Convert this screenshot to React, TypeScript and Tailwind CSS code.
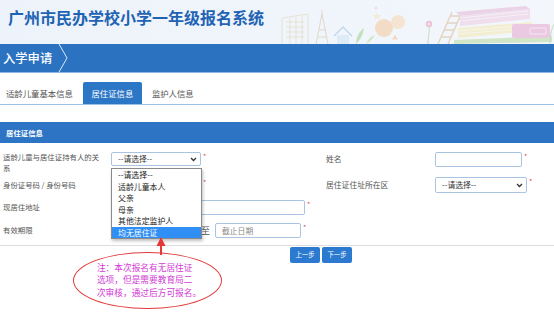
import React from 'react';

const CJK = "font-['Noto_Sans_CJK_SC','Noto_Sans',sans-serif]";

const options = ['--请选择--', '适龄儿童本人', '父亲', '母亲', '其他法定监护人', '均无居住证'];

const Star: React.FC = () => <span className="text-[#e04848] text-[7px] leading-none self-start mt-[1px] ml-[2px]">*</span>;

const Chevron: React.FC = () => (
  <svg width="7" height="5" viewBox="0 0 7 5" className="shrink-0">
    <path d="M1 1l2.5 2.5L6 1" fill="none" stroke="#333" strokeWidth="1.3" />
  </svg>
);

const HeaderArt: React.FC = () => (
  <svg width="274" height="44" viewBox="0 0 274 44" className="shrink-0 opacity-55">
    {/* building sketch */}
    <g stroke="#d9c9a8" strokeWidth="0.8" fill="none">
      <path d="M2 44V18l26-4v30" />
      <path d="M6 22h18M6 27h18M6 32h18M6 37h18M10 18v26M16 17v27M22 16v28" />
      {/* tower */}
      <path d="M36 44l6-30 6 30M39 30h7M38 37h9M42 14v-4" stroke="#cdb58a" />
    </g>
    {/* house */}
    <path d="M54 36l9-9 9 9" fill="none" stroke="#8fbbe0" strokeWidth="1.2" />
    <rect x="57" y="35" width="12" height="9" fill="#cfe4f5" />
    {/* leaves */}
    <path d="M76 44c0-8 4-13 8-16-1 6-3 11-8 16z" fill="#9fd18b" />
    <path d="M86 44c2-5 5-8 9-9-2 4-5 7-9 9z" fill="#b8de9c" />
    {/* orange shapes */}
    <circle cx="104" cy="28" r="9" fill="#f6c79a" />
    <circle cx="118" cy="22" r="7" fill="#f9d7b0" />
    <path d="M112 40l3-5 3 5-3-1z" fill="#f3b98a" />
    <path d="M96 12l2 3 3 0-2 2 1 3-3-2-3 2 1-3-2-2h3z" fill="#f7e2b8" />
    <circle cx="96" cy="8" r="1.5" fill="#f0c6d8" />
    {/* flower */}
    <path d="M148 44c0-8 2-12 1-18" stroke="#9cc98a" strokeWidth="1" fill="none" />
    <circle cx="149" cy="24" r="3.2" fill="#e79ac0" />
    <circle cx="149" cy="24" r="1.3" fill="#f7e3a0" />
    {/* ladder */}
    <g stroke="#d8b890" strokeWidth="1.4" fill="none">
      <path d="M158 44l14-32M168 44l14-32" />
      <path d="M161 37h10M164 30h10M167 23h10M170 16h10" />
    </g>
    {/* books */}
    <path d="M176 12l70-6 4 3-70 7z" fill="#e6b7d6" />
    <path d="M180 16l70-7v10l-70 7z" fill="#eecbe2" />
    <path d="M180 18l68-7M180 21l68-7" stroke="#fff" strokeWidth="0.6" />
    <path d="M178 28l74-6v9l-74 7z" fill="#f4e6b0" />
    <path d="M178 31l72-6M178 34l72-6" stroke="#fff" strokeWidth="0.6" />
    <path d="M174 40l98-4v6l-98 2z" fill="#b7d99a" />
    <rect x="232" y="24" width="38" height="14" rx="2" fill="#e7a5cf" />
    <rect x="250" y="28" width="16" height="6" rx="1" fill="none" stroke="#fff" strokeWidth="0.6" />
    <path d="M270 44c0-10 2-16 4-20" stroke="#9cc98a" strokeWidth="1" fill="none" />
  </svg>
);

export default function App() {
  return (
    <div className={`w-[554px] h-[327px] overflow-hidden bg-white relative ${CJK}`}>
      {/* header */}
      <div className="h-[44px] flex items-start justify-between bg-gradient-to-r from-[#edf3fa] to-[#f3f7fc]">
        <div className="pl-[8px] pt-[6px] text-[16px] leading-[22px] font-bold text-[#1f63b4] whitespace-nowrap">
          广州市民办学校小学一年级报名系统
        </div>
        <HeaderArt />
      </div>

      {/* nav bar */}
      <div className="h-[29px] bg-[#2b72c1] border-b border-[#8db7e3] flex items-center">
        <span className="pl-[3px] text-[12.3px] leading-none text-white font-medium">入学申请</span>
        <svg width="12" height="28" viewBox="0 0 12 28" className="ml-[6px]">
          <path d="M1 0l8 14-8 14" fill="none" stroke="#dce9f7" strokeWidth="1" />
        </svg>
      </div>

      {/* tabs */}
      <div className="mt-[9px] flex h-[23px] border-b border-[#9cc2ea] text-[8.4px] leading-none">
        <div className="pl-[6px] pr-[10px] flex items-center text-[#555]">适龄儿童基本信息</div>
        <div className="px-[8.5px] flex items-center bg-[#2c76c6] text-white rounded-t-[2px]">居住证信息</div>
        <div className="px-[10px] flex items-center text-[#555]">监护人信息</div>
      </div>

      {/* section header */}
      <div className="mt-[17px] h-[21px] bg-[#2d75c4] flex items-center pl-[6px] text-[7.4px] font-bold text-white">
        居住证信息
      </div>

      {/* form */}
      <div className="pt-[5px] text-[#555] text-[7.4px]">
        <div className="h-[26px] flex items-start">
          <div className="w-[111px] pl-[3px] pr-[10px] pt-[3px] leading-[11px]">适龄儿童与居住证持有人的关系</div>
          <div className="w-[215px] flex mt-[4px]">
            <div className="w-[90px] h-[14px] border border-[#a9c3e2] rounded-[2px] flex items-center justify-between pl-[6px] pr-[3px] text-[#333] text-[7.8px]">
              <span>--请选择--</span>
              <Chevron />
            </div>
            <Star />
          </div>
          <div className="w-[109px] mt-[5px] leading-[11px] text-[7.8px]">姓名</div>
          <div className="flex mt-[4px]">
            <div className="w-[87px] h-[15px] border border-[#a9c3e2] rounded-[2px]" />
            <Star />
          </div>
        </div>

        <div className="h-[22px] flex items-center">
          <div className="w-[111px] pl-[3px] leading-[11px] mb-[2px]">身份证号码 / 身份号码</div>
          <div className="w-[215px] flex">
            <div className="w-[90px] h-[15px] border border-[#a9c3e2] rounded-[2px]" />
            <Star />
          </div>
          <div className="w-[109px] leading-[11px] text-[7.8px] mb-[2px]">居住证住址所在区</div>
          <div className="flex">
            <div className="w-[92px] h-[16px] border border-[#a9c3e2] rounded-[2px] flex items-center justify-between pl-[6px] pr-[3px] text-[#333] text-[7.8px]">
              <span>--请选择--</span>
              <Chevron />
            </div>
            <Star />
          </div>
        </div>

        <div className="h-[23px] flex items-center">
          <div className="w-[111px] pl-[3px] leading-[11px] mb-[2px]">现居住地址</div>
          <div className="flex">
            <div className="w-[194px] h-[15px] border border-[#a9c3e2] rounded-[2px]" />
            <Star />
          </div>
        </div>

        <div className="h-[23px] flex items-center">
          <div className="w-[111px] pl-[3px] leading-[11px] mb-[2px]">有效期限</div>
          <div className="flex items-center">
            <div className="w-[87px] h-[15px] border border-[#a9c3e2] rounded-[2px]" />
            <span className="ml-[3px] mr-[5px] text-[9px]">至</span>
            <div className="w-[86px] h-[15px] border border-[#a9c3e2] rounded-[2px] flex items-center pl-[6px] text-[#888] text-[7.8px]">
              截止日期
            </div>
            <Star />
          </div>
        </div>
      </div>

      {/* buttons */}
      <div className="mt-[3px] border-t border-[#dcdcdc] pt-[1px] pl-[290px] flex gap-[2px]">
        <button className="w-[30px] h-[16px] rounded-[2px] bg-[#2b7ad0] text-white text-[6.4px] leading-none">上一步</button>
        <button className="w-[30px] h-[16px] rounded-[2px] bg-[#2b7ad0] text-white text-[6.4px] leading-none">下一步</button>
      </div>

      {/* open select list */}
      <div className="absolute left-[111px] top-[168px] w-[91px] bg-white border border-[#8a8a8a] shadow-[1px_2px_3px_rgba(0,0,0,0.25)] text-[7.9px] text-[#222]">
        {options.map((o, i) => (
          <div
            key={o}
            className={`h-[11.5px] leading-[11.5px] pl-[6px] ${i === options.length - 1 ? 'bg-[#2f8ff5] text-white' : ''}`}
          >
            {o}
          </div>
        ))}
      </div>

      {/* annotation arrow */}
      <svg width="12" height="20" viewBox="0 0 12 20" className="absolute left-[155px] top-[236px]">
        <path d="M6 1L1.5 10h9z" fill="#e53935" />
        <rect x="5" y="9" width="2" height="10" fill="#e53935" />
      </svg>

      {/* annotation ellipse */}
      <div className="absolute left-[73px] top-[252px] w-[149px] h-[57px] rounded-[50%] border-[1.5px] border-[#e23b3b] flex items-center justify-center">
        <div className="text-[8.7px] leading-[12.5px] text-[#d23ad6] pl-[3px]">
          <div>注：本次报名有无居住证</div>
          <div>选项，但是需要教育局二</div>
          <div>次审核，通过后方可报名。</div>
        </div>
      </div>
    </div>
  );
}
